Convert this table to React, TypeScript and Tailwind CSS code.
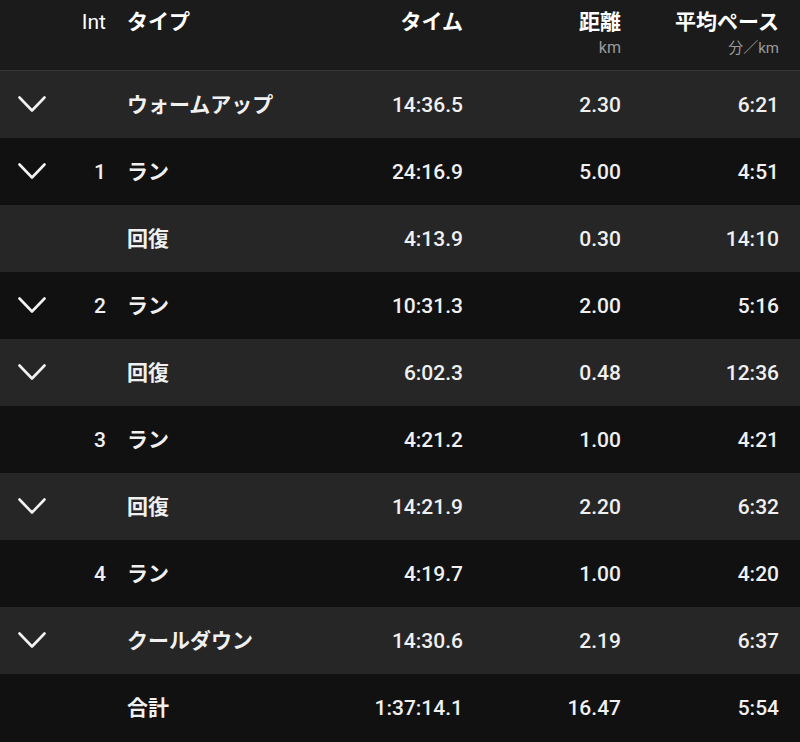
import React from "react";

type Lap = {
    expand: boolean;
    int: string;
    type: string;
    time: string;
    dist: string;
    pace: string;
};

const laps: Lap[] = [
    { expand: true, int: "", type: "ウォームアップ", time: "14:36.5", dist: "2.30", pace: "6:21" },
    { expand: true, int: "1", type: "ラン", time: "24:16.9", dist: "5.00", pace: "4:51" },
    { expand: false, int: "", type: "回復", time: "4:13.9", dist: "0.30", pace: "14:10" },
    { expand: true, int: "2", type: "ラン", time: "10:31.3", dist: "2.00", pace: "5:16" },
    { expand: true, int: "", type: "回復", time: "6:02.3", dist: "0.48", pace: "12:36" },
    { expand: false, int: "3", type: "ラン", time: "4:21.2", dist: "1.00", pace: "4:21" },
    { expand: true, int: "", type: "回復", time: "14:21.9", dist: "2.20", pace: "6:32" },
    { expand: false, int: "4", type: "ラン", time: "4:19.7", dist: "1.00", pace: "4:20" },
    { expand: true, int: "", type: "クールダウン", time: "14:30.6", dist: "2.19", pace: "6:37" },
    { expand: false, int: "", type: "合計", time: "1:37:14.1", dist: "16.47", pace: "5:54" },
];

const cols = "grid grid-cols-[61px_45px_21px_236px_100px_158px_158px_21px]";

const Chevron = () => (
    <svg width="28" height="17" viewBox="0 0 28 17" fill="none">
        <polyline points="1.5,1.5 14,14.5 26.5,1.5" stroke="#f2f2f2" strokeWidth="2.6" strokeLinecap="round" strokeLinejoin="round" />
    </svg>
);

const App = () => {
    return (
        <div className="min-h-[742px] bg-[#111111] font-['Roboto','Noto_Sans_CJK_JP',sans-serif] text-[21px]">
            {/* header */}
            <div className={`${cols} h-[71px] bg-[#1b1b1b] border-b border-[#363636] text-white`}>
                <div></div>
                <div className="pt-2 leading-[28px] text-right">Int</div>
                <div></div>
                <div className="pt-2 leading-[28px] font-bold">タイプ</div>
                <div className="pt-2 leading-[28px] font-bold text-right">タイム</div>
                <div className="pt-2 text-right">
                    <p className="leading-[28px] font-bold">距離</p>
                    <p className="mt-0.5 leading-[20px] text-[16px] text-[#9a9a9a]">km</p>
                </div>
                <div className="pt-2 text-right">
                    <p className="leading-[28px] font-bold">平均ペース</p>
                    <p className="mt-0.5 leading-[20px] text-[15px] text-[#9a9a9a]">分／km</p>
                </div>
                <div></div>
            </div>

            {laps.map((lap, i) => (
                <div
                    key={i}
                    className={`${cols} h-[67px] pt-[3px] items-center font-medium text-[#f0f0f0] ${i % 2 === 0 ? "bg-[#262626]" : "bg-[#111111]"}`}
                >
                    <div className="flex justify-center pl-0.5 -mt-[3px]">{lap.expand && <Chevron />}</div>
                    <div className="text-right">{lap.int}</div>
                    <div></div>
                    <div className="font-bold">{lap.type}</div>
                    <div className="text-right">{lap.time}</div>
                    <div className="text-right">{lap.dist}</div>
                    <div className="text-right">{lap.pace}</div>
                    <div></div>
                </div>
            ))}
        </div>
    );
};

export default App;
